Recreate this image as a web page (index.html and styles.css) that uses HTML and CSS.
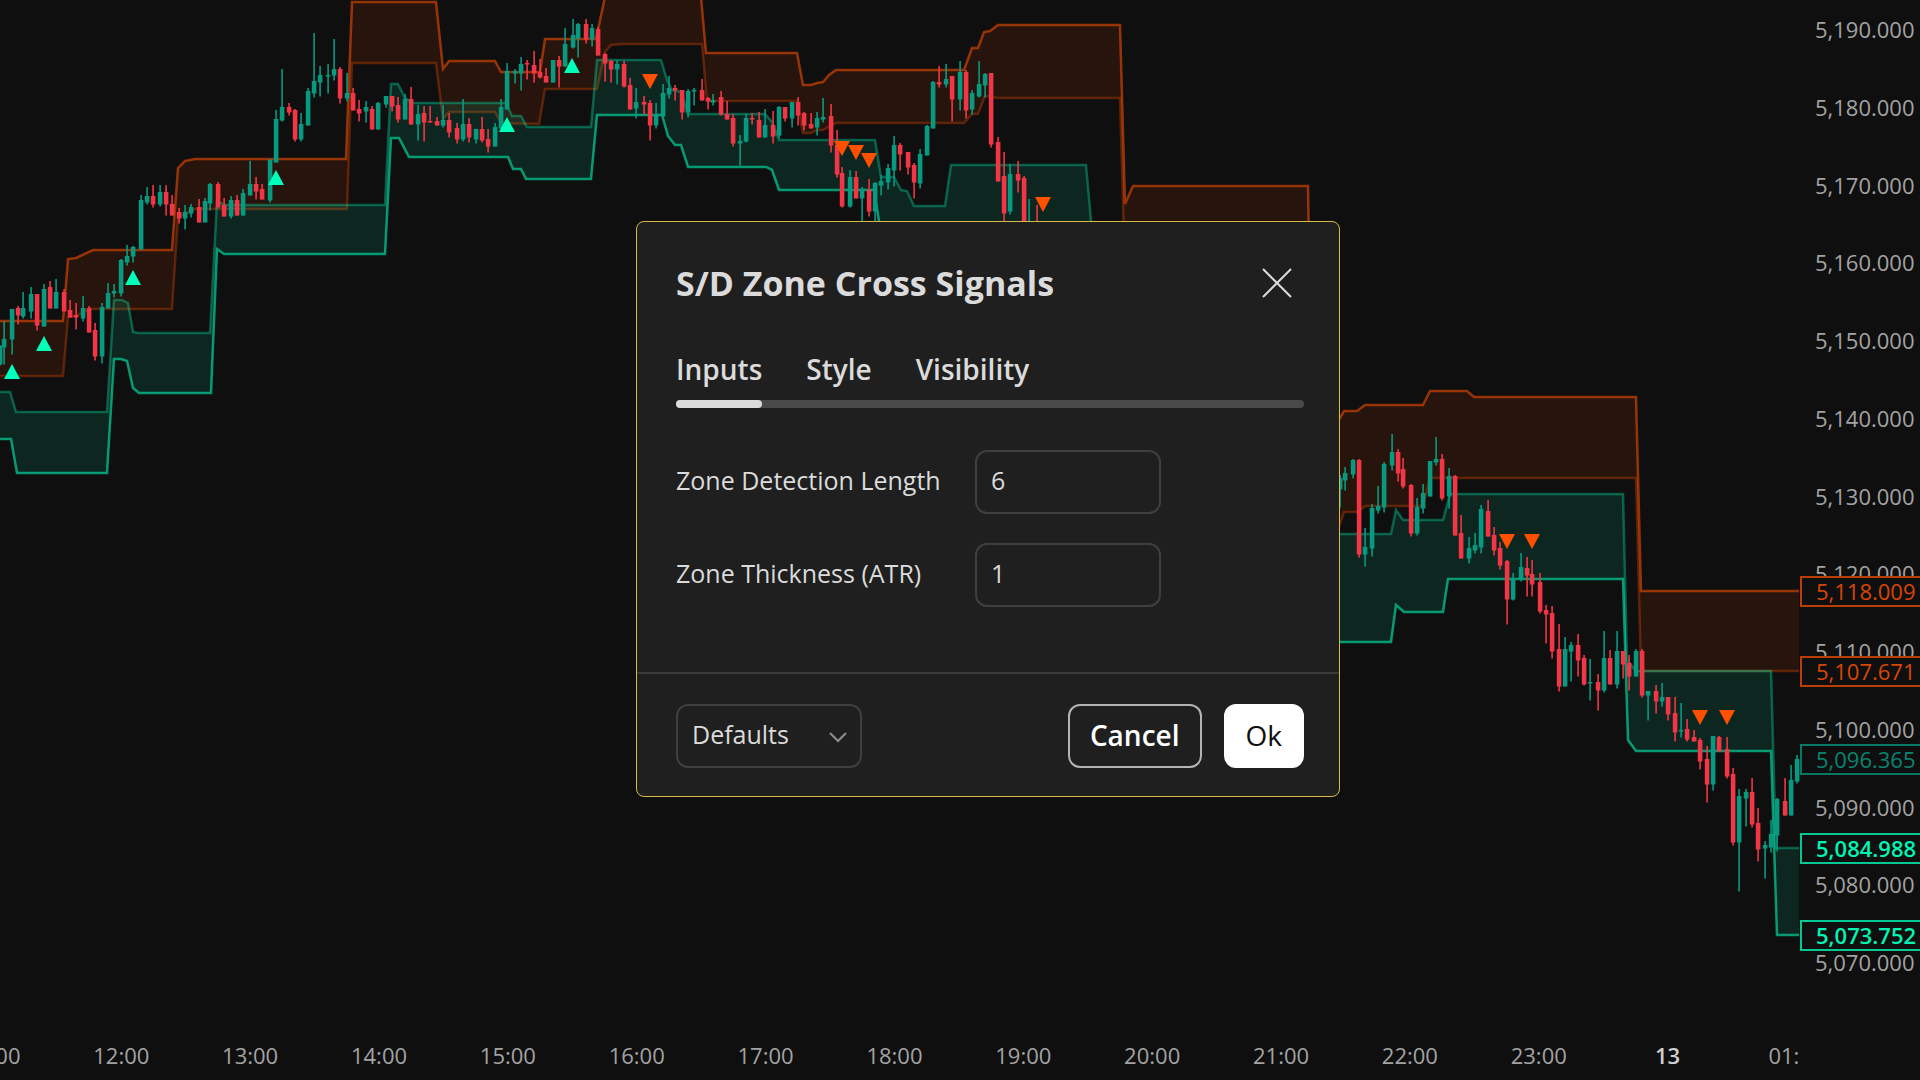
FILE: index.html
```html
<!DOCTYPE html>
<html lang="en">
<head>
<meta charset="utf-8">
<meta name="viewport" content="width=device-width, initial-scale=1">
<title>S/D Zone Cross Signals</title>
<link rel="stylesheet" href="styles.css">
</head>
<body>
<main class="workspace">
  <svg class="plot" viewBox="0 0 1800 1030" preserveAspectRatio="none" role="img" aria-label="Price chart with supply and demand zones">
    <g id="zones"></g>
    <g id="candles"></g>
    <g id="signals"></g>
  </svg>

  <aside class="price-axis" aria-label="Price scale">
    <span>5,190.000</span><span>5,180.000</span><span>5,170.000</span><span>5,160.000</span><span>5,150.000</span><span>5,140.000</span><span>5,130.000</span><span>5,120.000</span><span>5,110.000</span><span>5,100.000</span><span>5,090.000</span><span>5,080.000</span><span>5,070.000</span>
    <div class="price-tag supply tag-supply-top">5,118.009</div>
    <div class="price-tag supply tag-supply-bottom">5,107.671</div>
    <div class="price-tag last tag-last">5,096.365</div>
    <div class="price-tag demand tag-demand-top">5,084.988</div>
    <div class="price-tag demand tag-demand-bottom">5,073.752</div>
  </aside>

  <div class="time-axis" aria-label="Time scale">
    <div class="time-labels">
      <span>11:00</span><span>12:00</span><span>13:00</span><span>14:00</span><span>15:00</span><span>16:00</span><span>17:00</span><span>18:00</span><span>19:00</span><span>20:00</span><span>21:00</span><span>22:00</span><span>23:00</span><strong>13</strong><span>01:00</span>
    </div>
  </div>

  <form class="dialog" role="dialog" aria-labelledby="dialog-title">
    <header class="dialog-header">
      <h1 id="dialog-title">S/D Zone Cross Signals</h1>
      <button class="close" type="button" aria-label="Close">
        <svg width="30" height="30" viewBox="0 0 30 30"><path d="M1 1 29 29M29 1 1 29" fill="none" stroke="currentColor" stroke-width="2"/></svg>
      </button>
    </header>
    <div class="tabs" role="tablist">
      <button class="tab active" type="button" role="tab" aria-selected="true">Inputs</button>
      <button class="tab" type="button" role="tab" aria-selected="false">Style</button>
      <button class="tab" type="button" role="tab" aria-selected="false">Visibility</button>
    </div>
    <div class="track"></div>
    <div class="fields">
      <label for="length">Zone Detection Length</label>
      <input class="control" id="length" type="text" inputmode="numeric" value="6">
      <label for="thickness">Zone Thickness (ATR)</label>
      <input class="control" id="thickness" type="text" inputmode="numeric" value="1">
    </div>
    <footer class="dialog-footer">
      <div class="select">
        <select class="control" aria-label="Defaults"><option>Defaults</option></select>
        <svg class="chevron" width="18" height="11" viewBox="0 0 18 11"><path d="M1 1 9 9 17 1" fill="none" stroke="currentColor" stroke-width="2"/></svg>
      </div>
      <button class="button cancel" type="button">Cancel</button>
      <button class="button ok" type="submit">Ok</button>
    </footer>
  </form>
</main>
<script src="chart.js"></script>
</body>
</html>
```
FILE: styles.css
```css
* { box-sizing: border-box; }

body {
  margin: 0;
  background: #0f0f0f;
  color: #dbdbdb;
  font-family: "Open Sans", "Noto Sans", sans-serif;
}

button, input, select { font: inherit; color: inherit; }

.workspace {
  position: relative;
  display: grid;
  grid-template-columns: minmax(0, 1fr) 120px;
  grid-template-rows: minmax(0, 1fr) 50px;
  height: 100vh;
  min-height: 840px;
  overflow: hidden;
}

.plot { display: block; width: 100%; height: 100%; }

/* Zones */
.supply-fill { fill: #ff5000; fill-opacity: .1; }
.demand-fill { fill: #00ffbb; fill-opacity: .1; }
.line { fill: none; stroke-width: 2.5; }
.supply-outer { stroke: #ff5000; stroke-opacity: .55; }
.supply-inner { stroke: #ff5000; stroke-opacity: .3; }
.demand-outer { stroke: #00ffbb; stroke-opacity: .56; }
.demand-inner { stroke: #00ffbb; stroke-opacity: .32; }

/* Candles and signals */
.up { fill: #089981; }
.down { fill: #f23645; }
.buy { fill: #00ffbb; }
.sell { fill: #ff5000; }

/* Axes */
.price-axis, .time-axis {
  color: #a3a3a3;
  font-size: 22px;
  font-weight: 500;
  line-height: 26px;
}

.price-axis {
  position: relative;
  display: flex;
  flex-direction: column;
  justify-content: space-between;
  padding: 16px 0 55px 15px;
}

.price-tag {
  position: absolute;
  left: 0;
  right: -2px;
  height: 31px;
  padding-left: 14px;
  border: 2px solid;
  background: #0f0f0f;
}

.price-tag.supply { color: #d94602; border-color: #b93d04; }
.price-tag.last { color: #088570; border-color: #087764; }
.price-tag.demand { color: #00f5b4; border-color: #02c894; font-weight: 600; }
.tag-supply-top { top: 576px; }
.tag-supply-bottom { top: 656px; }
.tag-last { top: 744px; }
.tag-demand-top { top: 833px; }
.tag-demand-bottom { top: 920px; }

.time-axis { overflow: hidden; }
.time-labels { display: flex; margin: 12px -61px 0 -72px; }
.time-labels > * { flex: 1; text-align: center; }
.time-labels strong { color: #cfcfcf; font-weight: 600; }

/* Settings dialog */
.dialog {
  position: absolute;
  top: 221px;
  left: calc(50% - 324px);
  width: 704px;
  border: 1px solid #d8ba49;
  border-radius: 8px;
  background: #1f1f1f;
}

.dialog-header {
  display: flex;
  align-items: center;
  justify-content: space-between;
  padding: 37px 47px 0 39px;
}

h1 { margin: 0; font-size: 34px; line-height: 48px; font-weight: 700; }

.close { display: flex; padding: 0; border: 0; background: none; }

.tabs { display: flex; gap: 44px; margin: 44px 35px 0 39px; }

.tab {
  position: relative;
  padding: 0 0 21px;
  border: 0;
  background: none;
  font-size: 28px;
  line-height: 36px;
  font-weight: 600;
}

.tab.active::after {
  content: "";
  position: absolute;
  left: 0;
  right: 0;
  bottom: 0;
  z-index: 1;
  height: 8px;
  border-radius: 4px;
  background: #dbdbdb;
}

.track { height: 8px; margin: -8px 35px 0 39px; border-radius: 4px; background: #4a4a4a; }

.fields {
  display: grid;
  grid-template-columns: 299px 186px;
  row-gap: 29px;
  align-items: center;
  padding: 42px 39px 65px;
  font-size: 25px;
  font-weight: 500;
}

.fields label { padding-bottom: 4px; }

.control {
  width: 186px;
  height: 64px;
  padding: 0 14px 4px;
  border: 2px solid #3f3f3f;
  border-radius: 12px;
  background: #1f1f1f;
}

.dialog-footer {
  display: flex;
  gap: 22px;
  padding: 30px 35px 28px 39px;
  border-top: 2px solid #3a3a3a;
  font-size: 25px;
  font-weight: 500;
}

.select { position: relative; margin-right: auto; }
.select .control { appearance: none; }

.chevron {
  position: absolute;
  right: 15px;
  top: 28px;
  color: #8f8f8f;
  pointer-events: none;
}

.button {
  height: 64px;
  padding: 0 20px 2px;
  border: 2px solid #b4b4b4;
  border-radius: 12px;
  background: #1f1f1f;
  color: #fff;
  font-size: 28px;
  font-weight: 600;
}

.button.ok { border-color: #fff; background: #fff; color: #0f0f0f; font-weight: 500; }
```
FILE: chart.js
```js
const NS = "http://www.w3.org/2000/svg";

function add(parent, tag, cls, attrs) {
  const el = document.createElementNS(NS, tag);
  el.setAttribute("class", cls);
  for (const key in attrs) el.setAttribute(key, attrs[key]);
  document.getElementById(parent).appendChild(el);
}

// Each zone is an outer and an inner polyline with a fill between them.
const supplyOuter = "0,321 63,321 68,259 76,258 93,250 172,250 178,168 185,161 195,159 346,159 352,2 436,2 443,69 449,61 495,61 501,72 540,72 545,39 596,39 605,-3 701,-3 706,53 797,53 803,85 811,85 817,83 823,82 829,75 836,70 964,70 972,48 978,48 984,32 990,31 998,25 1120,25 1125,204 1133,186 1308,186 1312,430 1333,430 1344,411 1357,411 1365,405 1423,405 1430,391 1467,391 1474,397 1636,397 1641,591 1799,591";
const supplyInner = "0,376 63,376 68,317 76,316 90,309 172,309 178,217 195,209 347,209 352,63 436,63 443,119 449,112 495,112 501,123 539,124 545,89 597,89 605,52 611,45 622,44 702,44 707,101 797,101 803,133 811,133 817,130 823,130 836,123 964,123 972,114 978,114 985,96 998,98 1120,98 1124,240 1306,240 1312,545 1333,545 1344,512 1358,512 1365,506 1423,506 1430,478 1636,478 1641,671 1799,671";
const demandInner = "0,392 10,392 16,412 107,412 114,300 122,300 128,303 133,332 138,333 210,333 217,201 225,205 385,205 391,84 398,84 405,98 413,103 506,103 512,116 521,116 527,127 591,127 597,60 661,60 667,80 672,90 681,92 688,114 765,114 772,122 779,140 875,140 881,177 894,177 901,190 907,191 914,206 945,206 951,165 1086,165 1100,320 1220,320 1230,534 1391,534 1396,510 1403,520 1443,520 1450,494 1623,494 1627,660 1636,671 1771,671 1776,848 1799,848";
const demandOuter = "0,439 11,439 17,473 107,473 114,359 121,359 127,361 133,388 139,393 211,393 217,249 224,254 385,254 391,138 399,138 409,157 508,157 513,169 521,169 526,179 591,179 597,115 662,115 668,136 675,145 681,145 688,167 766,167 772,170 779,190 874,190 882,240 940,260 1086,260 1100,400 1220,400 1230,642 1391,642 1396,605 1404,612 1443,612 1448,579 1623,579 1628,740 1636,751 1771,751 1777,935 1799,935";

function zone(name, outer, inner) {
  const back = inner.split(" ").reverse().join(" ");
  add("zones", "polygon", name + "-fill", { points: outer + " " + back });
  add("zones", "polyline", "line " + name + "-inner", { points: inner });
  add("zones", "polyline", "line " + name + "-outer", { points: outer });
}
zone("supply", supplyOuter, supplyInner);
zone("demand", demandOuter, demandInner);

// x, high, body top, body bottom, low, direction (1 rising, 0 falling)
const candles = [
[0,345,346,364,365,1],[4,321,339,347,364,1],[12,309,309,339,354,1],[18,306,308,315,324,0],[23,292,308,316,318,1],
[31,287,294,311,318,1],[37,294,294,325,330,0],[44,284,289,326,326,1],[50,281,287,308,308,0],[56,279,292,308,308,1],
[64,289,292,311,311,0],[70,300,310,317,317,0],[76,303,315,317,329,0],[83,296,308,318,321,1],[89,306,308,332,332,0],
[95,323,330,356,360,0],[102,303,307,356,363,1],[108,283,293,308,308,1],[114,284,291,293,297,1],[121,259,260,293,296,1],
[127,245,256,262,265,1],[133,246,247,256,262,1],[141,195,200,249,249,1],[147,187,196,202,204,1],[153,185,196,204,207,0],
[160,185,192,204,206,1],[166,185,192,204,215,0],[172,195,204,215,215,0],[179,208,212,218,223,0],[185,205,212,218,229,1],
[191,204,207,213,217,1],[199,199,207,222,222,0],[205,198,201,222,222,1],[210,183,184,203,210,1],[218,182,184,207,207,0],
[224,198,205,216,216,0],[231,196,200,216,218,1],[237,195,200,215,215,0],[243,189,193,215,215,1],[250,161,184,195,195,1],
[256,177,184,191,199,0],[262,184,189,199,199,0],[270,159,160,200,202,1],[276,110,119,162,162,1],[282,69,107,120,121,1],
[289,103,107,112,115,0],[295,109,110,139,141,0],[301,113,124,139,141,1],[308,88,91,125,125,1],[314,33,81,93,97,1],
[320,66,75,82,96,1],[328,64,75,76,93,1],[334,39,69,75,80,1],[340,67,69,98,103,0],[347,73,93,98,101,1],
[353,88,93,110,110,0],[359,100,109,113,121,0],[366,101,107,111,122,1],[372,106,109,129,129,0],[378,102,103,129,129,1],
[386,96,96,104,107,1],[392,96,96,106,111,0],[398,97,105,119,122,0],[405,94,99,119,119,1],[411,87,99,124,124,0],
[418,105,114,124,140,1],[424,106,113,122,141,0],[430,106,121,122,122,0],[437,117,121,125,125,0],[443,105,120,125,127,1],
[449,113,120,132,137,0],[457,123,128,139,143,0],[463,99,124,139,141,1],[469,118,124,137,142,0],[476,129,129,139,143,1],
[482,117,129,140,142,0],[488,129,139,146,152,0],[495,123,127,146,146,1],[501,99,107,128,130,1],[507,63,71,109,109,1],
[515,69,71,73,83,1],[521,57,64,73,90,1],[527,60,63,64,79,0],[534,51,65,73,82,0],[540,59,72,77,78,0],
[546,68,76,82,82,0],[553,60,60,82,82,1],[559,56,60,66,87,0],[565,28,44,66,66,1],[573,19,35,47,48,1],
[578,23,24,38,57,1],[586,19,24,39,43,0],[592,24,28,39,46,1],[598,27,29,55,55,0],[605,53,54,63,81,0],
[611,60,61,69,82,0],[617,60,64,69,84,1],[624,61,64,86,87,0],[630,78,85,109,109,0],[636,88,102,108,118,1],
[644,96,102,104,114,0],[650,100,103,125,140,0],[656,103,114,125,128,1],[663,84,93,116,118,1],[669,76,88,94,98,1],
[675,85,88,90,100,0],[682,90,90,112,119,0],[688,89,91,112,117,1],[694,88,90,91,105,1],[702,79,90,100,100,0],
[708,97,98,101,109,0],[713,94,100,102,105,1],[721,91,97,114,115,0],[727,101,114,119,119,0],[733,114,118,143,146,0],
[740,135,141,143,165,1],[746,114,118,141,142,1],[752,113,118,119,124,0],[759,112,120,137,137,0],[765,109,125,137,137,1],
[773,111,125,136,143,0],[779,106,107,135,138,1],[785,107,107,118,121,0],[792,102,102,118,127,1],[798,97,102,115,125,0],
[804,112,113,125,130,0],[811,113,124,128,128,0],[817,112,118,127,135,1],[823,98,117,119,122,1],[831,104,116,145,152,0],
[837,130,145,174,177,0],[842,167,173,206,207,0],[850,170,177,206,207,1],[856,171,177,198,198,0],[862,187,190,198,222,1],
[869,179,190,211,216,0],[875,182,183,211,222,1],[881,175,181,185,195,1],[888,164,168,182,189,1],[894,136,145,170,186,1],
[900,143,145,154,170,0],[908,152,152,167,174,0],[914,163,165,182,198,0],[920,149,154,183,188,1],[927,125,126,155,155,1],
[933,81,82,128,128,1],[939,66,82,84,87,0],[946,64,79,84,87,1],[952,76,76,99,121,0],[960,61,72,99,110,1],
[966,70,72,110,118,0],[972,90,93,109,114,1],[979,61,84,96,97,1],[985,73,74,85,97,1],[991,73,73,144,147,0],
[998,137,142,181,181,0],[1004,152,176,213,224,0],[1010,164,174,211,214,1],[1018,161,174,180,192,0],[1024,176,178,224,224,0],
[1029,199,224,230,232,1],[1037,205,224,230,232,0],[1340,475,478,489,507,1],[1345,467,473,480,490,1],[1353,459,460,474,478,1],
[1359,459,460,554,557,0],[1365,528,547,554,566,1],[1372,504,508,548,556,1],[1378,486,506,510,513,1],[1384,462,464,507,512,1],
[1392,434,452,465,470,1],[1398,449,452,473,481,0],[1403,458,469,486,488,0],[1411,484,485,533,536,0],[1417,498,507,533,535,1],
[1423,484,493,508,513,1],[1430,461,461,496,496,1],[1436,437,459,462,465,1],[1442,454,459,498,500,0],[1449,468,476,496,508,1],
[1455,475,476,535,535,0],[1461,515,533,558,558,0],[1469,537,548,558,563,1],[1475,533,545,550,553,1],[1481,505,509,547,553,1],
[1488,500,511,536,536,0],[1494,527,535,550,555,0],[1500,542,548,565,569,0],[1507,560,561,599,624,0],[1513,573,578,599,600,1],
[1521,553,567,579,581,1],[1527,557,568,575,596,0],[1532,560,574,584,596,0],[1540,573,582,611,613,0],[1546,605,610,614,643,0],
[1552,606,613,651,658,0],[1559,624,649,686,691,0],[1565,637,649,686,686,1],[1571,642,645,651,681,1],[1578,634,645,660,676,0],
[1584,655,658,684,685,0],[1590,659,682,683,700,1],[1598,674,682,690,710,0],[1604,631,658,690,692,1],[1610,650,658,684,684,0],
[1617,631,651,684,688,1],[1623,651,651,664,678,0],[1629,655,663,676,690,0],[1636,649,651,676,676,1],[1642,649,651,695,697,0],
[1648,691,691,695,720,1],[1656,685,691,701,713,0],[1662,683,697,701,706,1],[1668,697,697,714,720,0],[1675,697,713,732,741,0],
[1681,703,730,731,737,1],[1687,719,729,739,741,0],[1694,730,737,741,741,0],[1700,738,740,761,769,0],[1707,746,759,784,802,0],
[1713,736,736,784,790,1],[1719,736,737,751,751,0],[1727,737,749,776,778,0],[1733,768,774,842,845,0],[1739,789,796,842,891,1],
[1746,789,792,798,826,1],[1752,778,792,824,827,0],[1758,808,823,849,861,0],[1765,841,845,848,878,1],[1771,820,834,847,852,1],
[1777,798,799,835,851,1],[1785,778,801,815,815,0],[1791,765,780,815,815,1],[1797,755,759,781,783,1]
];
for (const [x, high, top, bottom, low, rising] of candles) {
  const cls = rising ? "up" : "down";
  add("candles", "rect", cls, { x: x - 0.7, y: high, width: 1.6, height: low - high + 0.5 });
  add("candles", "rect", cls, { x: x - 2.2, y: top, width: 4.6, height: bottom - top + 0.5 });
}

const buys = [[12,364],[44,336],[133,270],[276,170],[507,117],[572,58]];
const sells = [[650,89],[842,156],[856,160],[869,168],[1043,212],[1507,549],[1532,549],[1700,725],[1727,725]];
for (const [x, y] of buys) add("signals", "path", "buy", { d: `M${x} ${y}l8 15h-16z` });
for (const [x, y] of sells) add("signals", "path", "sell", { d: `M${x} ${y}l8 -15h-16z` });
```
